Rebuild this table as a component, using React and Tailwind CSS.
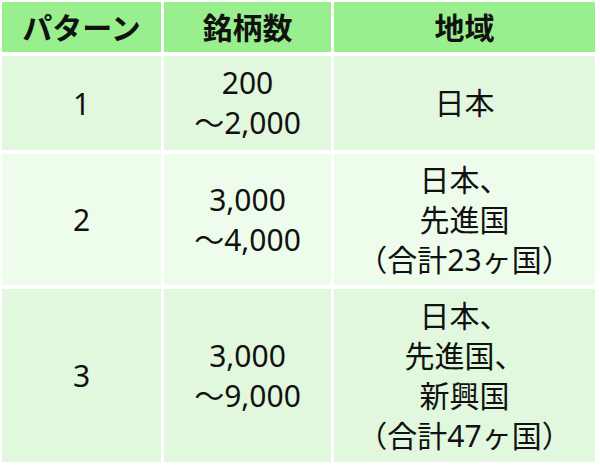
const ROWS = [
  { id: '1', count: ['200', '～2,000'], region: ['日本'], tone: 'bg-[#e2f8de]' },
  { id: '2', count: ['3,000', '～4,000'], region: ['日本、', '先進国', '（合計23ヶ国）'], tone: 'bg-[#eefcec]' },
  { id: '3', count: ['3,000', '～9,000'], region: ['日本、', '先進国、', '新興国', '（合計47ヶ国）'], tone: 'bg-[#e2f8de]' },
];

const font = { fontFamily: '"Noto Sans", "Noto Sans CJK JP", sans-serif' };

function Lines({ lines }) {
  return (
    <div className="flex flex-col items-center text-[30px] leading-[40px] text-[#111]">
      {lines.map((l, i) => <span key={i}>{l}</span>)}
    </div>
  );
}

export default function App() {
  return (
    <div className="w-[600px] h-[468px] bg-white pl-[2px] pt-[2px]" style={font}>
      <div className="grid grid-cols-[159px_167px_261px] grid-rows-[50px_94px_131px_173px] gap-x-[3px] gap-y-[4px]">
        {['パターン', '銘柄数', '地域'].map(h => (
          <div key={h} className="bg-[#99ef8d] flex items-center justify-center text-[30px] font-bold text-[#111]">
            {h}
          </div>
        ))}
        {ROWS.map(r => (
          <div key={r.id} className="contents">
            <div className={`${r.tone} flex items-center justify-center text-[30px] text-[#111]`}>{r.id}</div>
            <div className={`${r.tone} flex items-center justify-center`}><Lines lines={r.count} /></div>
            <div className={`${r.tone} flex items-center justify-center`}><Lines lines={r.region} /></div>
          </div>
        ))}
      </div>
    </div>
  );
}
